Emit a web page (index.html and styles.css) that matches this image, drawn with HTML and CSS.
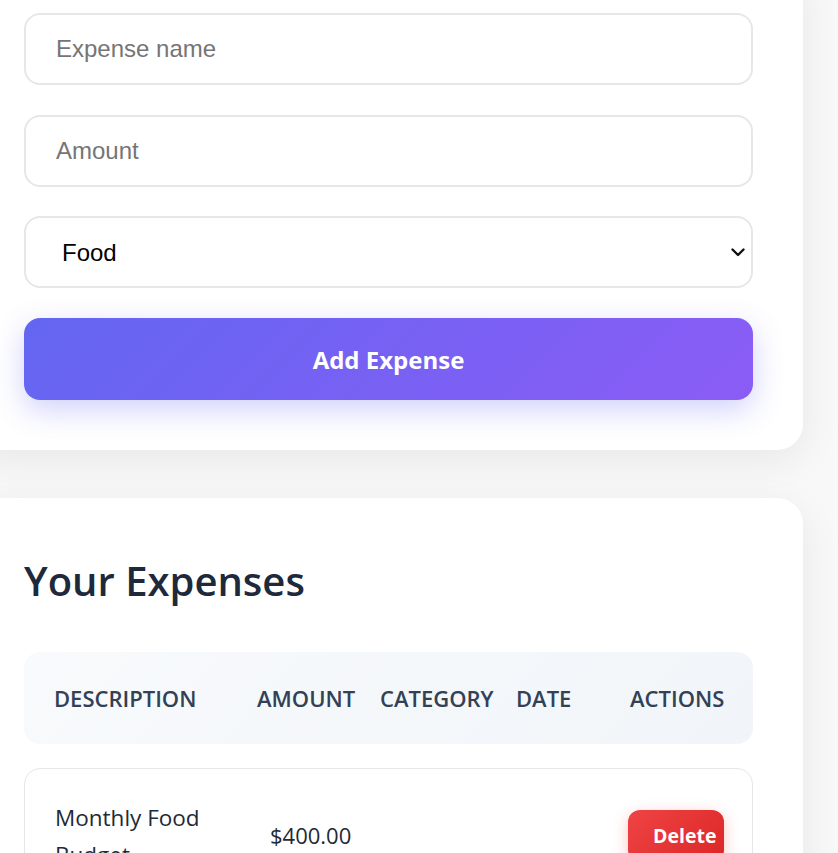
FILE: index.html
```html
<!DOCTYPE html>
<html lang="en">
<head>
<meta charset="utf-8">
<title>Expenses</title>
<link rel="stylesheet" href="styles.css">
</head>
<body>
<div class="page">
  <section class="card form-card">
    <input class="field" type="text" placeholder="Expense name">
    <input class="field" type="text" placeholder="Amount">
    <div class="select-wrap">
      <select class="field select">
        <option>Food</option>
        <option>Transport</option>
        <option>Entertainment</option>
      </select>
      <svg class="chevron" width="14" height="9" viewBox="0 0 14 9" aria-hidden="true">
        <polyline points="1.5,1.5 7,7 12.5,1.5" fill="none" stroke="#111" stroke-width="2.4" stroke-linecap="round" stroke-linejoin="round"/>
      </svg>
    </div>
    <button class="btn-add" type="button">Add Expense</button>
  </section>

  <section class="card list-card">
    <h2 class="title">Your Expenses</h2>
    <div class="thead">
      <div>Description</div>
      <div>Amount</div>
      <div>Category</div>
      <div>Date</div>
      <div>Actions</div>
    </div>
    <div class="row">
      <div class="desc">Monthly Food Budget</div>
      <div class="amount">$400.00</div>
      <div></div>
      <div></div>
      <div><button class="btn-del" type="button">Delete</button></div>
    </div>
  </section>
</div>
</body>
</html>
```

FILE: styles.css
```css
html, body {
  margin: 0;
  padding: 0;
}
body {
  background: #f8f8f8;
  font-family: "Open Sans", "Noto Sans", sans-serif;
  overflow: hidden;
  height: 853px;
}
.page {
  width: 829px;
  margin-left: -26px;
  margin-top: -37px;
  display: flex;
  flex-direction: column;
  gap: 48px;
}
.card {
  background: #ffffff;
  border-radius: 26px;
  padding: 50px;
  box-shadow: 0 10px 40px rgba(0, 0, 0, 0.07);
}
.form-card {
  display: flex;
  flex-direction: column;
  gap: 29.7px;
}
.field {
  box-sizing: border-box;
  height: 72px;
  width: 100%;
  border: 2px solid #e5e7eb;
  border-radius: 16px;
  padding: 0 30px;
  font-family: "Liberation Sans", Arial, sans-serif;
  font-size: 24px;
  color: #000;
  background: #fff;
  outline: none;
}
.field::placeholder {
  color: #757575;
}
.select-wrap {
  position: relative;
}
.select {
  display: block;
  appearance: none;
  -webkit-appearance: none;
  padding: 0 40px 0 36px;
}
.chevron {
  position: absolute;
  right: 8px;
  top: 32px;
  pointer-events: none;
}
.btn-add {
  height: 82px;
  border: none;
  border-radius: 16px;
  background: linear-gradient(135deg, #6366f1 0%, #8b5cf6 100%);
  color: #fff;
  font-family: "Open Sans", sans-serif;
  font-weight: 700;
  font-size: 24px;
  box-shadow: 0 10px 30px rgba(99, 102, 241, 0.3);
}
.title {
  margin: 6px 0 43.5px;
  font-size: 40px;
  font-weight: 600;
  color: #1e293b;
  line-height: 54px;
}
.thead {
  height: 92px;
  box-sizing: border-box;
  padding-left: 30px;
  display: grid;
  grid-template-columns: 203px 123px 136px 114px 1fr;
  align-items: center;
  border-radius: 16px;
  background: linear-gradient(135deg, #f8fafc 0%, #f1f5f9 100%);
  text-transform: uppercase;
  font-size: 22px;
  font-weight: 600;
  color: #334155;
}
.row {
  margin-top: 24px;
  border: 1px solid #e5e7eb;
  border-radius: 16px;
  padding: 30px;
  display: grid;
  grid-template-columns: 215px 140px 110px 108px 1fr;
  align-items: center;
  font-size: 22.5px;
  line-height: 37px;
  color: #1f2937;
}
.desc {
  max-width: 160px;
}
.amount {
  font-size: 22px;
}
.btn-del {
  height: 52px;
  border: none;
  border-radius: 12px;
  padding: 0 8px 0 25px;
  background: linear-gradient(135deg, #ef4444 0%, #dc2626 100%);
  color: #fff;
  font-family: "Open Sans", sans-serif;
  font-weight: 700;
  font-size: 19.5px;
  box-shadow: 0 4px 15px rgba(239, 68, 68, 0.3);
}
```
